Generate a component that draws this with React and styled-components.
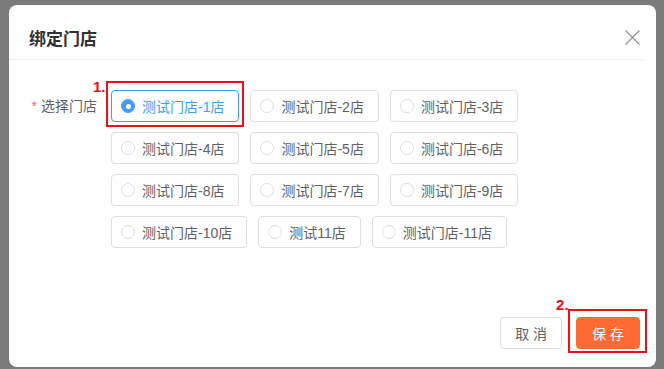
import React, { useState } from "react";
import styled, { createGlobalStyle } from "styled-components";

const GlobalStyle = createGlobalStyle`
  html, body {
    margin: 0;
    padding: 0;
    background: #7b7b7b;
    font-family: "Liberation Sans", "Noto Sans CJK SC", sans-serif;
  }
`;

const Page = styled.div`
  width: 664px;
  height: 369px;
  box-sizing: border-box;
  padding: 5px 8px 0 9px;
  overflow: hidden;
`;

const Dialog = styled.div`
  width: 647px;
  height: 362px;
  background: #fff;
  border-radius: 8px;
  display: flex;
  flex-direction: column;
`;

const Header = styled.div`
  height: 55px;
  box-sizing: border-box;
  margin-right: 13px;
  padding: 24px 3px 0 20px;
  display: flex;
  justify-content: space-between;
  align-items: flex-start;
  border-bottom: 1px solid #ebeef5;
`;

const Title = styled.div`
  font-size: 17px;
  line-height: 22px;
  font-weight: 700;
  color: #303133;
`;

const Close = styled.button`
  width: 15px;
  height: 15px;
  margin-top: 1px;
  padding: 0;
  border: none;
  background: transparent;
  cursor: pointer;
  display: flex;
`;

const Body = styled.div`
  padding: 30px 20px 0 20px;
  display: flex;
  align-items: flex-start;
`;

const Label = styled.div`
  width: 82px;
  flex-shrink: 0;
  box-sizing: border-box;
  padding-right: 14px;
  height: 32px;
  line-height: 32px;
  text-align: right;
  font-size: 14px;
  color: #606266;

  span {
    color: #f56c6c;
    margin-right: 4px;
  }
`;

const Group = styled.div`
  max-width: 440px;
  display: flex;
  flex-wrap: wrap;
  column-gap: 11px;
  row-gap: 10px;
`;

const Anchor = styled.div`
  position: relative;
  display: inline-flex;
`;

const Radio = styled.label`
  display: inline-flex;
  align-items: center;
  height: 32px;
  box-sizing: border-box;
  padding: 0 14px 0 9px;
  border: 1px solid ${(p) => (p.$checked ? "#409eff" : "#dcdfe6")};
  border-radius: 4px;
  font-size: 14px;
  color: ${(p) => (p.$checked ? "#409eff" : "#606266")};
  cursor: pointer;
  white-space: nowrap;
`;

const Dot = styled.span`
  width: 14px;
  height: 14px;
  box-sizing: border-box;
  border-radius: 50%;
  margin-right: 7px;
  border: 1px solid ${(p) => (p.$checked ? "#409eff" : "#dcdfe6")};
  background: ${(p) => (p.$checked ? "#409eff" : "#fff")};
  display: flex;
  align-items: center;
  justify-content: center;

  &::after {
    content: "";
    width: 5px;
    height: 5px;
    border-radius: 50%;
    background: #fff;
    display: ${(p) => (p.$checked ? "block" : "none")};
  }
`;

const Footer = styled.div`
  margin-top: auto;
  padding: 0 16px 18px;
  display: flex;
  justify-content: flex-end;
  gap: 14px;
`;

const Button = styled.button`
  height: 32px;
  padding: 0 ${(p) => (p.$primary ? 15 : 14)}px;
  border-radius: 4px;
  font-family: inherit;
  font-size: 14px;
  cursor: pointer;
  border: 1px solid ${(p) => (p.$primary ? "#ff6a35" : "#dcdfe6")};
  background: ${(p) => (p.$primary ? "#ff6a35" : "#fff")};
  color: ${(p) => (p.$primary ? "#fff" : "#606266")};
`;

const Marker = styled.div`
  position: absolute;
  top: ${(p) => p.$t}px;
  left: ${(p) => p.$l}px;
  right: ${(p) => p.$r}px;
  bottom: ${(p) => p.$b}px;
  border: 2px solid #e8101a;
  pointer-events: none;
`;

const Step = styled.div`
  position: absolute;
  top: ${(p) => p.$t}px;
  left: ${(p) => p.$l}px;
  font-size: 15px;
  line-height: 15px;
  font-weight: 700;
  color: #e8101a;
`;

const stores = [
  "测试门店-1店",
  "测试门店-2店",
  "测试门店-3店",
  "测试门店-4店",
  "测试门店-5店",
  "测试门店-6店",
  "测试门店-8店",
  "测试门店-7店",
  "测试门店-9店",
  "测试门店-10店",
  "测试11店",
  "测试门店-11店",
];

export default function App() {
  const [picked, setPicked] = useState(stores[0]);

  return (
    <>
      <GlobalStyle />
      <Page>
        <Dialog>
          <Header>
            <Title>绑定门店</Title>
            <Close aria-label="close">
              <svg width="15" height="15" viewBox="0 0 15 15">
                <path d="M0.5 0.5L14.5 14.5M14.5 0.5L0.5 14.5" stroke="#909399" strokeWidth="1.2" fill="none" />
              </svg>
            </Close>
          </Header>
          <Body>
            <Label>
              <span>*</span>选择门店
            </Label>
            <Group>
              {stores.map((name, i) => {
                const checked = picked === name;
                const radio = (
                  <Radio key={name} $checked={checked} onClick={() => setPicked(name)}>
                    <Dot $checked={checked} />
                    {name}
                  </Radio>
                );
                if (i !== 0) return radio;
                return (
                  <Anchor key={name}>
                    {radio}
                    <Marker $t={-9} $l={-5} $r={-5} $b={-5} />
                    <Step $t={-11} $l={-18}>1.</Step>
                  </Anchor>
                );
              })}
            </Group>
          </Body>
          <Footer>
            <Button>取 消</Button>
            <Anchor>
              <Button $primary>保 存</Button>
              <Marker $t={-8} $l={-8} $r={-7} $b={-4} />
              <Step $t={-20} $l={-20}>2.</Step>
            </Anchor>
          </Footer>
        </Dialog>
      </Page>
    </>
  );
}
